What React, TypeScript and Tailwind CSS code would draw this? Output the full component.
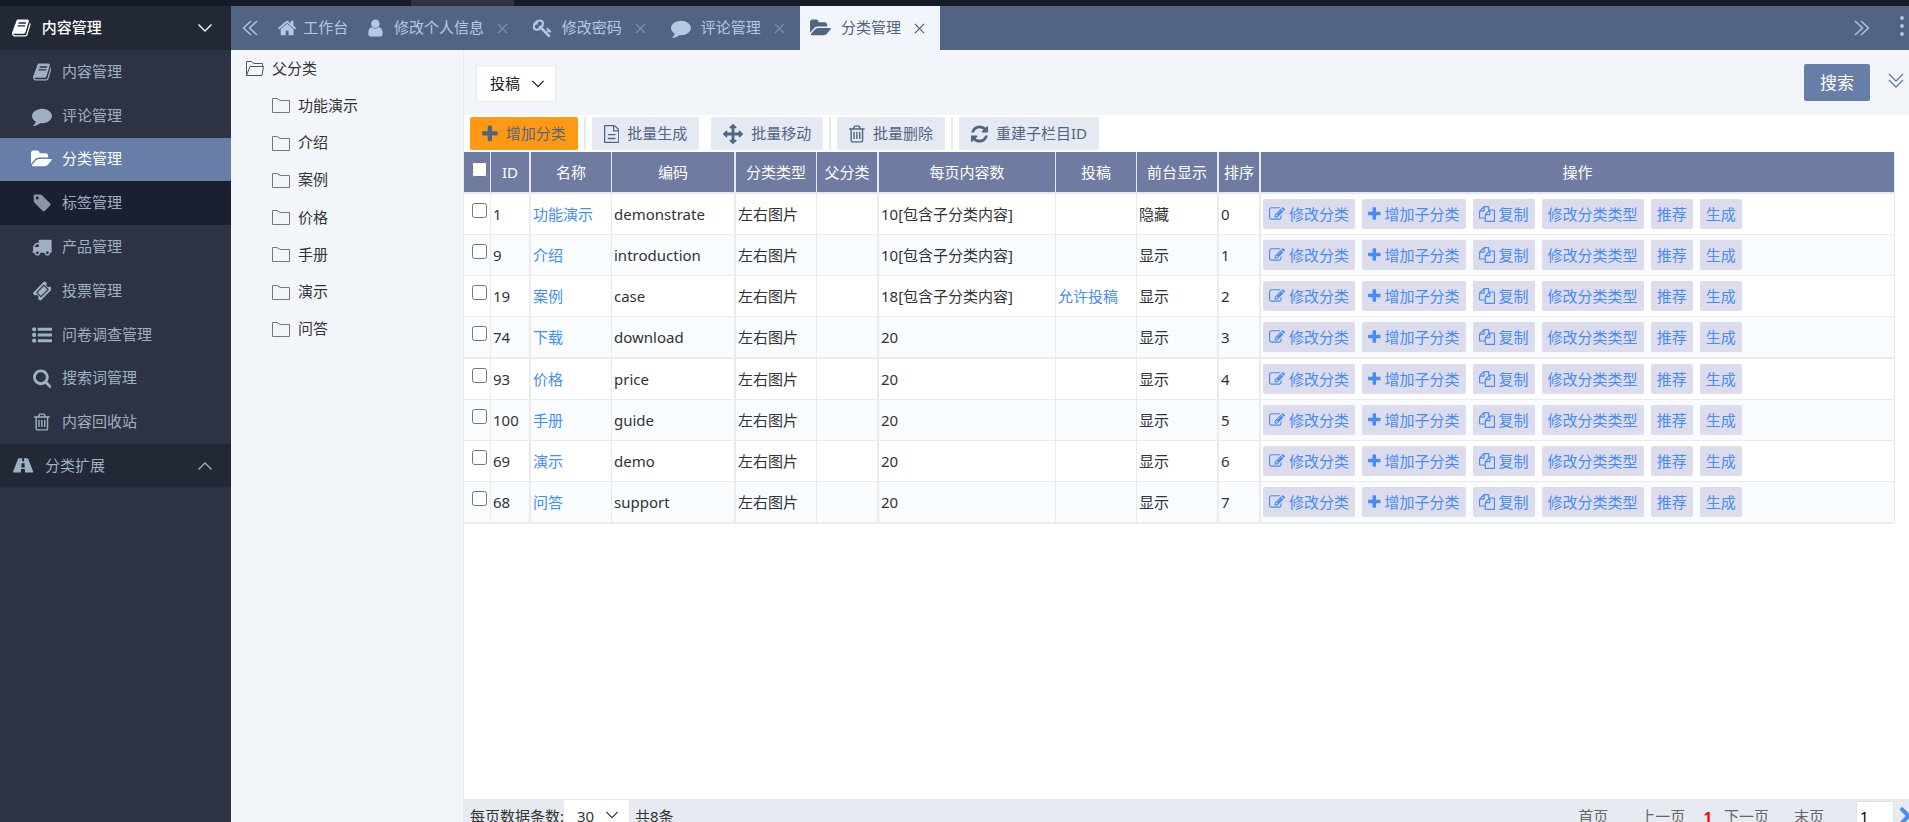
import React from "react";

type Glyph = { d: string; x: number; w: number };

const glyphs = {
  book: {
    x: 60, w: 1672,
    d: "M1703 478q40 57 18 129l-275 906q-19 64-76.5 107.5t-122.5 43.5h-923q-77 0-148.5-53.5t-99.5-131.5q-24-67-2-127 0-4 3-27t4-37q1-8-3-21.5t-3-19.500q2-11 8-21t16.5-23.5 16.5-23.5q23-38 45-91.5t30-91.5q3-10 .5-30t-.5-28q3-11 17-28t17-23q21-36 42-92t25-90q1-9-2.5-32t.5-28q4-13 22-30.5t22-22.5q19-26 42.5-84.5t27.5-96.5q1-8-3-25.5t-2-26.5q2-8 9-18t18-23 17-21q8-12 16.5-30.5t15-35 16-36 19.500-32 26.5-23.5 36-11.5 47.5 5.5l-1 3q38-9 51-9h761q74 0 114 56t18 130l-274 906q-36 119-71.5 153.5t-128.5 34.5h-869q-27 0-38 15-11 16-1 43 24 70 144 70h923q29 0 56-15.5t35-41.500l300-987q7-22 5-57 38 15 59 43zm-1064 2q-4 13 2 22.5t20 9.5h608q13 0 25.5-9.5t16.5-22.5l21-64q4-13-2-22.5t-20-9.5h-608q-13 0-25.5 9.5t-16.5 22.5zm-83 256q-4 13 2 22.5t20 9.5h608q13 0 25.5-9.5t16.5-22.5l21-64q4-13-2-22.5t-20-9.5h-608q-13 0-25.5 9.5t-16.5 22.5z",
  },
  comment: {
    x: 0, w: 1792,
    d: "M1792 896q0 174-120 321.5t-326 233-450 85.5q-70 0-145-8-198 175-460 242-49 14-114 22-17 2-30.5-9t-17.5-29v-1q-3-4-.5-12t2-10 4.5-9.5l6-9 7-8.5 8-9q7-8 31-34.5t34.5-38 31-39.5 32.5-51 27-59 26-76q-157-89-247.5-220t-90.5-281q0-130 71-248.5t191-204.5 286-136.5 348-50.5q244 0 450 85.5t326 233 120 321.5z",
  },
  folderOpen: {
    x: 0, w: 1888,
    d: "M1879 952q0 31-31 66l-336 396q-43 51-120.5 86.5t-143.5 35.5h-1088q-34 0-60.5-13t-26.5-43q0-31 31-66l336-396q43-51 120.500-86.5t143.500-35.5h1088q34 0 60.5 13t26.5 43zm-343-344v160h-832q-94 0-197 47.500t-164 119.5l-337 396-5 6q0-4-.5-12.5t-.5-12.5v-960q0-92 66-158t158-66h320q92 0 158 66t66 158v32h544q92 0 158 66t66 158z",
  },
  tag: {
    x: 64, w: 1600,
    d: "M576 448q0-53-37.5-90.5t-90.5-37.5-90.5 37.5-37.5 90.5 37.5 90.5 90.5 37.5 90.5-37.5 37.5-90.5zm1067 576q0 53-37 90l-491 492q-39 37-91 37-53 0-90-37l-715-716q-38-37-64.5-101t-26.5-117v-416q0-52 38-90t90-38h416q53 0 117 26.5t102 64.5l715 714q37 39 37 91z",
  },
  truck: {
    x: 32, w: 1760,
    d: "M640 1408q0-52-38-90t-90-38-90 38-38 90 38 90 90 38 90-38 38-90zm-384-512h384v-256h-158q-13 0-22 9l-195 195q-9 9-9 22v30zm1280 512q0-52-38-90t-90-38-90 38-38 90 38 90 90 38 90-38 38-90zm256-1088v1024q0 15-4 26.5t-13.5 18.5-16.5 11.5-23.5 6-22.5 2-25.5 0-22.5-.5q0 106-75 181t-181 75-181-75-75-181h-384q0 106-75 181t-181 75-181-75-75-181h-64q-3 0-22.5.5t-25.5 0-22.5-2-23.5-6-16.5-11.5-13.5-18.5-4-26.5q0-26 19-45t45-19v-320q0-8-.5-35t0-38 2.5-34.5 6.5-37 14-30.5 22.5-30l198-198q19-19 50.5-32t58.5-13h160v-192q0-26 19-45t45-19h1024q26 0 45 19t19 45z",
  },
  ticket: {
    x: 48, w: 1696,
    d: "M1024 452l316 316-572 572-316-316zm-211 979l618-618q19-19 19-45t-19-45l-362-362q-18-18-45-18t-45 18l-618 618q-19 19-19 45t19 45l362 362q18 18 45 18t45-18zm889-637l-907 908q-37 37-90.5 37t-90.5-37l-126-126q56-56 56-136t-56-136-136-56-136 56l-125-126q-37-37-37-90.5t37-90.5l907-906q37-37 90.5-37t90.5 37l125 125q-56 56-56 136t56 136 136 56 136-56l126 125q37 37 37 90.5t-37 90.5z",
  },
  list: {
    x: 0, w: 1792,
    d: "M384 1408a192 192 0 1 1-384 0a192 192 0 1 1 384 0zm0-512a192 192 0 1 1-384 0a192 192 0 1 1 384 0zm0-512a192 192 0 1 1-384 0a192 192 0 1 1 384 0zM1792 1312v192q0 32-32 32h-1216q-32 0-32-32v-192q0-32 32-32h1216q32 0 32 32zm0-512v192q0 32-32 32h-1216q-32 0-32-32v-192q0-32 32-32h1216q32 0 32 32zm0-512v192q0 32-32 32h-1216q-32 0-32-32v-192q0-32 32-32h1216q32 0 32 32z",
  },
  search: {
    x: 64, w: 1664,
    d: "M1216 832q0-185-131.5-316.5t-316.5-131.5-316.5 131.5-131.5 316.5 131.5 316.5 316.5 131.5 316.5-131.5 131.5-316.5zm512 832q0 52-38 90t-90 38q-54 0-90-38l-343-342q-179 124-399 124-143 0-273.5-55.5t-225-150-150-225-55.5-273.5 55.5-273.5 150-225 225-150 273.5-55.5 273.5 55.5 225 150 150 225 55.5 273.5q0 220-124 399l343 343q37 37 37 90z",
  },
  trash: {
    x: 192, w: 1408,
    d: "M704 736v576q0 14-9 23t-23 9h-64q-14 0-23-9t-9-23v-576q0-14 9-23t23-9h64q14 0 23 9t9 23zm256 0v576q0 14-9 23t-23 9h-64q-14 0-23-9t-9-23v-576q0-14 9-23t23-9h64q14 0 23 9t9 23zm256 0v576q0 14-9 23t-23 9h-64q-14 0-23-9t-9-23v-576q0-14 9-23t23-9h64q14 0 23 9t9 23zm128 724v-948h-896v948q0 22 7 40.500t14.5 27 10.5 8.5h832q3 0 10.5-8.5t14.5-27 7-40.5zm-672-1076h448l-48-117q-7-9-17-11h-317q-10 2-17 11zm928 32v64q0 14-9 23t-23 9h-96v948q0 83-47 143.5t-113 60.5h-832q-66 0-113-58.5t-47-141.5v-952h-96q-14 0-23-9t-9-23v-64q0-14 9-23t23-9h309l70-167q15-37 54-63t79-26h320q40 0 79 26t54 63l70 167h309q14 0 23 9t9 23z",
  },
  road: {
    x: 60, w: 1800,
    d: "M1111 1000v-4l-24-320q-1-13-11-22.5t-23-9.5h-186q-13 0-23 9.5t-11 22.5l-24 320v4q-1 12 8 20t21 8h244q12 0 21-8t8-20zm749 411q0 73-46 73h-704q13 0 22-9.5t8-22.5l-20-256q-1-13-11-22.5t-23-9.5h-272q-13 0-23 9.5t-11 22.5l-20 256q-1 13 8 22.5t22 9.5h-670q-46 0-46-73 0-54 26-116l417-1044q8-19 26-33t38-14h339q-13 0-23 9.5t-11 22.5l-15 192q-1 14 8 23t22 9h132q13 0 22-9t8-23l-15-192q-1-13-11-22.5t-23-9.500h339q20 0 38 14t26 33l417 1044q26 62 26 116z",
  },
  home: {
    x: 80, w: 1632,
    d: "M1472 992v480q0 26-19 45t-45 19h-384v-384h-256v384h-384q-26 0-45-19t-19-45v-480q0-1 .5-3t.5-3l575-474 575 474q1 2 1 6zm223-69l-62 74q-8 9-21 11h-3q-13 0-21-7l-692-577-692 577q-12 8-24 7-13-2-21-11l-62-74q-8-10-7-23.5t11-21.5l719-599q32-26 76-26t76 26l244 204v-195q0-14 9-23t23-9h192q14 0 23 9t9 23v408l219 182q10 8 11 21.5t-7 23.5z",
  },
  user: {
    x: 144, w: 1504,
    d: "M1536 1399q0 109-62.5 187t-150.5 78h-854q-88 0-150.5-78t-62.5-187q0-85 8.5-160.5t31.5-152 58.5-131 94-89 134.5-34.5q131 128 313 128t313-128q76 0 134.5 34.5t94 89 58.5 131 31.5 152 8.5 160.5zm-256-887q0 159-112.5 271.5t-271.5 112.5-271.5-112.5-112.5-271.5 112.5-271.5 271.5-112.5 271.5 112.5 112.5 271.5z",
  },
  key: {
    x: 36, w: 1684,
    d: "M832 512q0-80-56-136t-136-56-136 56-56 136q0 42 19 83-41-19-83-19-80 0-136 56t-56 136 56 136 136 56 136-56 56-136q0-42-19-83 41 19 83 19 80 0 136-56t56-136zm851 704q0 17-49 66t-66 49q-9 0-28.5-16t-36.5-33-38.5-40-24.5-26l-96 96 220 220q28 28 28 68 0 42-39 81t-81 39q-40 0-68-28l-671-671q-176 131-365 131-163 0-265.5-102.5t-102.5-265.5q0-160 95-313t248-248 313-95q163 0 265.5 102.5t102.5 265.5q0 189-131 365l355 355 96-96q-3-3-26-24.5t-40-38.5-33-36.5-16-28.5q0-17 49-66t66-49q13 0 23 10 6 6 46 44.5t82 79.5 86.5 86 73 78 28.5 41z",
  },
  plus: {
    x: 192, w: 1408,
    d: "M1600 736v192q0 40-28 68t-68 28h-416v416q0 40-28 68t-68 28h-192q-40 0-68-28t-28-68v-416h-416q-40 0-68-28t-28-68v-192q0-40 28-68t68-28h416v-416q0-40 28-68t68-28h192q40 0 68 28t28 68v416h416q40 0 68 28t28 68z",
  },
  file: {
    x: 128, w: 1536,
    d: "M1596 380q28 28 48 76t20 88v1152q0 40-28 68t-68 28h-1344q-40 0-68-28t-28-68v-1600q0-40 28-68t68-28h896q40 0 88 20t76 48zm-444-244v376h376q-10-29-22-41l-313-313q-12-12-41-22zm384 1528v-1024h-416q-40 0-68-28t-28-68v-416h-768v1536h1280zm-1024-736q0-14 9-23t23-9h704q14 0 23 9t9 23v64q0 14-9 23t-23 9h-704q-14 0-23-9t-9-23v-64zm736 352q14 0 23 9t9 23v64q0 14-9 23t-23 9h-704q-14 0-23-9t-9-23v-64q0-14 9-23t23-9h704z",
  },
  arrows: {
    x: 0, w: 1792,
    d: "M1792 896q0 26-19 45l-256 256q-19 19-45 19t-45-19-19-45v-128h-384v384h128q26 0 45 19t19 45-19 45l-256 256q-19 19-45 19t-45-19l-256-256q-19-19-19-45t19-45 45-19h128v-384h-384v128q0 26-19 45t-45 19-45-19l-256-256q-19-19-19-45t19-45l256-256q19-19 45-19t45 19 19 45v128h384v-384h-128q-26 0-45-19t-19-45 19-45l256-256q19-19 45-19t45 19l256 256q19 19 19 45t-19 45-45 19h-128v384h384v-128q0-26 19-45t45-19 45 19l256 256q19 19 19 45z",
  },
  refresh: {
    x: 128, w: 1536,
    d: "M1639 1056q0 5-1 7-64 268-268 434.5t-478 166.5q-146 0-282.5-55t-243.5-157l-129 129q-19 19-45 19t-45-19-19-45v-448q0-26 19-45t45-19h448q26 0 45 19t19 45-19 45l-137 137q71 66 161 102t187 36q134 0 250-65t186-179q11-17 53-117 8-23 30-23h192q13 0 22.5 9.5t9.5 22.5zm25-800v448q0 26-19 45t-45 19h-448q-26 0-45-19t-19-45 19-45l138-138q-148-137-349-137-134 0-250 65t-186 179q-11 17-53 117-8 23-30 23h-199q-13 0-22.5-9.5t-9.5-22.5v-7q65-268 270-434.5t480-166.5q146 0 284 55.5t245 156.5l130-129q19-19 45-19t45 19 19 45z",
  },
  edit: {
    x: 0, w: 1792,
    d: "M888 1184l116-116-152-152-116 116v56h96v96h56zm440-720q-16-16-33 1l-350 350q-17 17-1 33t33-1l350-350q17-17 1-33zm80 594v190q0 119-84.5 203.5t-203.5 84.5h-832q-119 0-203.5-84.5t-84.5-203.5v-832q0-119 84.5-203.5t203.5-84.5h832q63 0 117 25 15 7 18 23 3 17-9 29l-49 49q-14 14-32 8-23-6-45-6h-832q-66 0-113 47t-47 113v832q0 66 47 113t113 47h832q66 0 113-47t47-113v-126q0-13 9-22l64-64q15-15 35-7t20 29zm-96-738l288 288-672 672h-288v-288zm444 132l-92 92-288-288 92-92q28-28 68-28t68 28l152 152q28 28 28 68t-28 68z",
  },
  copy: {
    x: 0, w: 1792,
    d: "M1696 384q40 0 68 28t28 68v1216q0 40-28 68t-68 28h-960q-40 0-68-28t-28-68v-288h-544q-40 0-68-28t-28-68v-672q0-40 20-88t48-76l408-408q28-28 76-48t88-20h416q40 0 68 28t28 68v328q68-40 128-40h416zm-544 213l-299 299h299v-299zm-640-384l-299 299h299v-299zm196 647l316-316v-416h-384v416q0 40-28 68t-68 28h-416v640h512v-256q0-40 20-88t48-76zm956 804v-1152h-384v416q0 40-28 68t-68 28h-416v640h896z",
  },
  next: {
    x: 256, w: 1216,
    d: "M1427 941l-742 742q-19 19-45 19t-45-19l-166-166q-19-19-19-45t19-45l531-531-531-531q-19-19-19-45t19-45l166-166q19-19 45-19t45 19l742 742q19 19 19 45t-19 45z",
  },
} satisfies Record<string, Glyph>;

type IconName = keyof typeof glyphs;

function Icon({ name, className = "h-5" }: { name: IconName; className?: string }) {
  const g = glyphs[name];
  return (
    <svg className={`${className} w-auto shrink-0`} viewBox={`${g.x} 0 ${g.w} 1792`} fill="currentColor" aria-hidden="true">
      <path d={g.d} />
    </svg>
  );
}

function Line({ d, className, box = "0 0 16 16" }: { d: string; className: string; box?: string }) {
  return (
    <svg className={`${className} shrink-0`} viewBox={box} fill="none" stroke="currentColor" strokeWidth="1.4" aria-hidden="true">
      <path d={d} />
    </svg>
  );
}

function Label({ children }: { children: React.ReactNode }) {
  return <span className="pb-0.5">{children}</span>;
}

const CHEVRON_DOWN = "M1.500 4.500L8 11L14.500 4.500";
const CHEVRON_UP = "M1.500 11.500L8 5L14.500 11.500";

const menu: { icon: IconName; label: string; state?: "active" | "hover" }[] = [
  { icon: "book", label: "内容管理" },
  { icon: "comment", label: "评论管理" },
  { icon: "folderOpen", label: "分类管理", state: "active" },
  { icon: "tag", label: "标签管理", state: "hover" },
  { icon: "truck", label: "产品管理" },
  { icon: "ticket", label: "投票管理" },
  { icon: "list", label: "问卷调查管理" },
  { icon: "search", label: "搜索词管理" },
  { icon: "trash", label: "内容回收站" },
];

function Sidebar() {
  return (
    <nav className="flex w-[231px] shrink-0 flex-col bg-[#2d3342] text-[#9fb0c3]">
      <button className="flex h-11 items-center gap-[11px] bg-[#222835] pl-3 pr-[18px] font-medium text-white">
        <Icon name="book" />
        <Label>内容管理</Label>
        <Line d={CHEVRON_DOWN} className="ml-auto size-4" />
      </button>
      <ul className="grid h-[394px] grid-rows-9">
        {menu.map((m) => (
          <li key={m.label} className="flex">
            <a
              href="#"
              className={`flex flex-1 items-center gap-[9px] pl-[31px] ${
                m.state === "active" ? "bg-[#677ea9] text-white" : m.state === "hover" ? "bg-[#1a2030]" : ""
              }`}
            >
              <span className={`flex w-[22px] justify-center ${m.state === "hover" ? "text-[#8e93a5]" : ""}`}>
                <Icon name={m.icon} />
              </span>
              <Label>{m.label}</Label>
            </a>
          </li>
        ))}
      </ul>
      <button className="flex h-[43px] items-center gap-3 bg-[#222835] pl-[13px] pr-[18px]">
        <Icon name="road" />
        <Label>分类扩展</Label>
        <Line d={CHEVRON_UP} className="ml-auto size-4" />
      </button>
    </nav>
  );
}

const tabs: { icon: IconName; label: string; active?: boolean }[] = [
  { icon: "user", label: "修改个人信息" },
  { icon: "key", label: "修改密码" },
  { icon: "comment", label: "评论管理" },
  { icon: "folderOpen", label: "分类管理", active: true },
];

function TabBar() {
  return (
    <div className="flex h-11 shrink-0 items-stretch bg-[#526484] text-[#b5c7e3]">
      <button className="flex items-center pl-[11px] pr-5" aria-label="向左">
        <Line d="M9 1L1.500 8L9 15M15 1L7.500 8L15 15" className="size-4" />
      </button>
      <a href="#" className="flex items-center gap-[7px] pr-[9px]">
        <Icon name="home" />
        <Label>工作台</Label>
      </a>
      {tabs.map((t) => (
        <div
          key={t.label}
          className={`flex items-center gap-[13px] pl-[10px] pr-[15px] ${t.active ? "bg-[#f2f5f9] text-[#526484]" : ""}`}
        >
          <a href="#" className="flex items-center gap-[10px]">
            <Icon name={t.icon} />
            <Label>{t.label}</Label>
          </a>
          <button className={t.active ? "" : "text-[#8092b0]"} aria-label="关闭">
            <Line d="M1 1L11 11M11 1L1 11" box="0 0 12 12" className="size-[11px]" />
          </button>
        </div>
      ))}
      <button className="ml-auto flex items-center pr-[30px]" aria-label="向右">
        <Line d="M1 1L8.500 8L1 15M7 1L14.500 8L7 15" className="size-4" />
      </button>
      <button className="flex items-center pb-1 pr-[5px]" aria-label="更多">
        <svg className="h-5 w-1" viewBox="0 0 4 20" fill="currentColor" aria-hidden="true">
          <circle cx="2" cy="2" r="1.900" />
          <circle cx="2" cy="10" r="1.900" />
          <circle cx="2" cy="18" r="1.900" />
        </svg>
      </button>
    </div>
  );
}

const categories = ["功能演示", "介绍", "案例", "价格", "手册", "演示", "问答"];

function Tree() {
  return (
    <aside className="w-[233px] shrink-0 border-r border-[#e5e9f0] bg-[#f2f5f9] text-[#333]">
      <ul className="grid h-[298px] grid-rows-8">
        <li className="flex items-center gap-2 pl-[15px]">
          <svg className="h-4 w-[18px]" viewBox="0 0 18 16" fill="none" stroke="#555" aria-hidden="true">
            <path d="M0.500 14.500V0.500H5.500L8 2.500H16.500V5.500M0.500 14.500H16L17.500 5.500H4L0.500 14.500" />
          </svg>
          <a href="#" className="pb-0.5">父分类</a>
        </li>
        {categories.map((c) => (
          <li key={c} className="flex items-center gap-2 pl-[41px]">
            <svg className="h-[15px] w-[18px]" viewBox="0 0 18 15" fill="none" stroke="#777" aria-hidden="true">
              <path d="M0.500 14.500V0.500H5L8 2.500H17.500V14.500Z" />
            </svg>
            <a href="#" className="pb-0.5">{c}</a>
          </li>
        ))}
      </ul>
    </aside>
  );
}

function Filters() {
  return (
    <div className="flex h-[65px] items-start bg-[#f2f5f9] pl-3 pr-[5px]">
      <div className="relative mt-[15px] h-[37px] w-20 border border-[#e5e9f2] bg-white text-[#222]">
        <select aria-label="投稿" className="h-full w-full appearance-none bg-transparent pb-0.5 pl-[13px] outline-none">
          <option>投稿</option>
        </select>
        <Line d={CHEVRON_DOWN} className="pointer-events-none absolute right-[10px] top-[11px] size-[14px]" />
      </div>
      <button className="ml-auto mt-[14px] h-[37px] rounded-xs bg-[#677ea9] px-4 text-[17px] text-white">搜索</button>
      <button className="ml-[18px] mt-[23px] text-[#677ea9]" aria-label="展开">
        <Line d="M1 1L8 8L15 1M1 7L8 14L15 7" className="size-4" />
      </button>
    </div>
  );
}

function ToolButton({ icon, label, size, tone = "bg-[#e5e9f2]" }: { icon: IconName; label: string; size?: string; tone?: string }) {
  return (
    <button className={`flex h-[33px] items-center gap-2 rounded-xs px-3 text-[#526484] ${tone}`}>
      <Icon name={icon} className={size} />
      <Label>{label}</Label>
    </button>
  );
}

function Divider() {
  return <span className="h-[33px] w-0.5 bg-[#e5e9f2]" />;
}

function Toolbar() {
  return (
    <div className="flex h-[37px] items-center gap-[6px] pl-[6px]">
      <ToolButton icon="plus" label="增加分类" tone="bg-[#ff9914]" />
      <Divider />
      <ToolButton icon="file" label="批量生成" size="h-[18px]" />
      <span className="w-0" />
      <ToolButton icon="arrows" label="批量移动" />
      <Divider />
      <ToolButton icon="trash" label="批量删除" />
      <Divider />
      <ToolButton icon="refresh" label="重建子栏目ID" />
    </div>
  );
}

const columns: { label: string; width: string; thick?: boolean }[] = [
  { label: "ID", width: "w-10", thick: true },
  { label: "名称", width: "w-[81px]" },
  { label: "编码", width: "w-[124px]", thick: true },
  { label: "分类类型", width: "w-[81px]" },
  { label: "父分类", width: "w-[62px]", thick: true },
  { label: "每页内容数", width: "w-[177px]" },
  { label: "投稿", width: "w-[81px]" },
  { label: "前台显示", width: "w-[82px]", thick: true },
  { label: "排序", width: "w-[42px]", thick: true },
  { label: "操作", width: "w-auto" },
];

const rows = [
  { id: 1, name: "功能演示", code: "demonstrate", size: "10[包含子分类内容]", post: "", show: "隐藏" },
  { id: 9, name: "介绍", code: "introduction", size: "10[包含子分类内容]", post: "", show: "显示" },
  { id: 19, name: "案例", code: "case", size: "18[包含子分类内容]", post: "允许投稿", show: "显示" },
  { id: 74, name: "下载", code: "download", size: "20", post: "", show: "显示" },
  { id: 93, name: "价格", code: "price", size: "20", post: "", show: "显示" },
  { id: 100, name: "手册", code: "guide", size: "20", post: "", show: "显示" },
  { id: 69, name: "演示", code: "demo", size: "20", post: "", show: "显示" },
  { id: 68, name: "问答", code: "support", size: "20", post: "", show: "显示" },
];

const actions: { label: string; icon?: IconName }[] = [
  { label: "修改分类", icon: "edit" },
  { label: "增加子分类", icon: "plus" },
  { label: "复制", icon: "copy" },
  { label: "修改分类类型" },
  { label: "推荐" },
  { label: "生成" },
];

function CategoryTable() {
  return (
    <table className="w-full table-fixed border-separate border-spacing-0 text-[#333]">
      <colgroup>
        <col className="w-[27px]" />
        {columns.map((c) => (
          <col key={c.label} className={c.width} />
        ))}
      </colgroup>
      <thead>
        <tr className="h-[42px] bg-[#707ba1] text-white">
          <th className="border-b-2 border-r border-[#e7e9f2] p-0 pb-[6px] pl-1">
            <input type="checkbox" aria-label="全选" className="mx-auto block size-[15px]" />
          </th>
          {columns.map((c) => (
            <th
              key={c.label}
              className={`whitespace-nowrap border-b-2 border-[#e7e9f2] p-0 font-normal ${c.thick ? "border-r-2" : "border-r"}`}
            >
              {c.label}
            </th>
          ))}
        </tr>
      </thead>
      <tbody>
        {rows.map((r, i) => {
          const cells: React.ReactNode[] = [
            r.id,
            <a href="#" className="text-[#458cf5]">{r.name}</a>,
            r.code,
            "左右图片",
            "",
            r.size,
            r.post && <a href="#" className="text-[#458cf5]">{r.post}</a>,
            r.show,
            i,
          ];
          const line = i % 4 === 3 ? "border-b-2" : "border-b";
          return (
            <tr key={r.id} className={`${i % 4 === 3 ? "h-[42px]" : "h-[41px]"} ${i % 2 ? "bg-[#f8fcff]" : "bg-white"}`}>
              <td className={`border-r border-[#ebebeb] p-0 pb-[7px] pl-1 ${line}`}>
                <input type="checkbox" aria-label={r.name} className="mx-auto block size-[15px]" />
              </td>
              {cells.map((cell, j) => (
                <td
                  key={j}
                  className={`whitespace-nowrap border-[#ebebeb] p-0 pb-px pl-[2px] ${line} ${columns[j].thick ? "border-r-2" : "border-r"}`}
                >
                  {cell}
                </td>
              ))}
              <td className={`border-r border-[#ebebeb] p-0 pb-px pl-[2px] ${line}`}>
                <div className="flex gap-[7px]">
                  {actions.map((a) => (
                    <a
                      key={a.label}
                      href="#"
                      className="flex h-[30px] items-center gap-1 whitespace-nowrap rounded-xs bg-[#dddcec] px-[6px] text-[#458cf5]"
                    >
                      {a.icon && <Icon name={a.icon} className="h-4" />}
                      {a.label}
                    </a>
                  ))}
                </div>
              </td>
            </tr>
          );
        })}
      </tbody>
    </table>
  );
}

function Pager() {
  return (
    <footer className="flex h-[23px] shrink-0 items-start overflow-hidden bg-[#e7eaf1] text-[#333]">
      <label htmlFor="page-size" className="pl-[6px] leading-[34px]">每页数据条数:</label>
      <div className="relative mt-px h-[33px] w-[65px] bg-white">
        <select id="page-size" className="h-full w-full appearance-none bg-transparent pb-0.5 pl-[13px] outline-none">
          <option>30</option>
        </select>
        <Line d={CHEVRON_DOWN} className="pointer-events-none absolute right-[10px] top-2 size-[14px]" />
      </div>
      <span className="pl-[6px] leading-[34px]">共8条</span>
      <div className="ml-auto flex items-start leading-[34px] text-[#666]">
        <a href="#">首页</a>
        <a href="#" className="ml-8">上一页</a>
        <span className="ml-[18px] font-bold text-[#f00]">1</span>
        <a href="#" className="ml-3">下一页</a>
        <a href="#" className="ml-[25px]">末页</a>
        <input aria-label="页码" defaultValue="1" className="ml-8 mt-[2px] h-[31px] w-[38px] border border-[#dde1ea] bg-white pb-0.5 pl-[3px] text-black" />
        <button aria-label="跳转" className="ml-1 mt-[7px] w-[11px] overflow-hidden text-[#458cf5]">
          <Icon name="next" />
        </button>
      </div>
    </footer>
  );
}

export default function App() {
  return (
    <div className="flex h-screen flex-col overflow-hidden bg-white font-['Noto_Sans','Noto_Sans_CJK_SC',sans-serif] text-[15px] leading-6">
      <div className="flex h-[6px] shrink-0 bg-[#151b24] pl-[411px]">
        <span className="w-[103px] bg-[#2e3241]" />
      </div>
      <div className="flex min-h-0 flex-1">
        <Sidebar />
        <div className="flex min-w-0 flex-1 flex-col">
          <TabBar />
          <div className="flex min-h-0 flex-1">
            <Tree />
            <main className="flex min-w-0 flex-1 flex-col">
              <Filters />
              <Toolbar />
              <div className="min-h-0 flex-1 pr-[14px]">
                <CategoryTable />
              </div>
              <Pager />
            </main>
          </div>
        </div>
      </div>
    </div>
  );
}
